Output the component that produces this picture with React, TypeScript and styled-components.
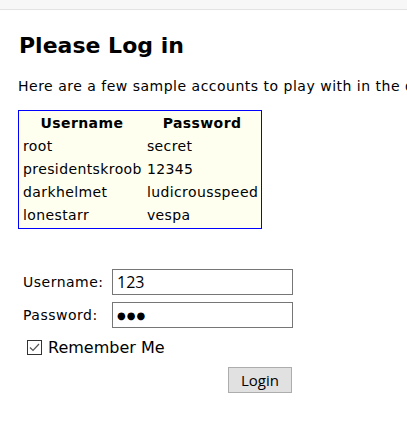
import React from 'react';
import styled, { createGlobalStyle } from 'styled-components';

const GlobalStyle = createGlobalStyle`
  html, body {
    margin: 0;
    padding: 0;
    background: #ffffff;
    overflow: hidden;
  }
  body {
    font-family: "DejaVu Sans", Verdana, sans-serif;
    color: #000000;
  }
`;

const TopBar = styled.div`
  height: 9px;
  background: #f7f7f7;
  border-bottom: 1px solid #e2e2e2;
`;

const Content = styled.div`
  padding: 0 18px;
  white-space: nowrap;
`;

const Heading = styled.h1`
  font-size: 22px;
  font-weight: bold;
  line-height: 26px;
  margin: 23px 0 0 1px;
`;

const Intro = styled.p`
  font-size: 14px;
  line-height: 18px;
  letter-spacing: 0.5px;
  margin: 18px 0 0 0;
`;

const AccountTable = styled.table`
  margin-top: 15px;
  border: 1px solid #0000ff;
  background: #fffff0;
  border-spacing: 2px;
  font-size: 14px;
  letter-spacing: 0.4px;
`;

const HeadCell = styled.th`
  font-weight: bold;
  text-align: center;
  padding: 1px;
  line-height: 19px;
`;

const Cell = styled.td`
  padding: 1px 1px 1px 2px;
  line-height: 19px;
`;

const LoginForm = styled.form`
  margin-top: 40px;
  display: flex;
  flex-direction: column;
  align-items: flex-start;
`;

const FieldRow = styled.div`
  display: grid;
  grid-template-columns: 94px 181px;
  align-items: center;
  margin-bottom: 7px;
`;

const Label = styled.label`
  font-size: 14px;
  letter-spacing: 0.5px;
  padding-left: 5px;
`;

const TextInput = styled.input<{ $masked?: boolean }>`
  box-sizing: border-box;
  width: 181px;
  height: 26px;
  border: 1px solid #767676;
  padding: 1px 4px;
  font-family: ${({ $masked }) => ($masked ? '"DejaVu Sans", sans-serif' : '"Open Sans", "Noto Sans", sans-serif')};
  font-size: ${({ $masked }) => ($masked ? '10px' : '16px')};
  letter-spacing: ${({ $masked }) => ($masked ? '1px' : '0')};
  color: #000;
  outline: none;
`;

const RememberRow = styled.label`
  display: flex;
  align-items: center;
  gap: 6px;
  margin: 3px 0 0 9px;
  font-size: 16px;
`;

const CheckBox = styled.span`
  box-sizing: border-box;
  width: 15px;
  height: 15px;
  border: 1px solid #333333;
  background: #ffffff;
  display: flex;
  align-items: center;
  justify-content: center;
`;

const ButtonRow = styled.div`
  width: 274px;
  display: flex;
  justify-content: flex-end;
  margin-top: 10px;
`;

const LoginButton = styled.button`
  box-sizing: border-box;
  width: 64px;
  height: 26px;
  background: #e1e1e1;
  border: 1px solid #adadad;
  font-family: "Open Sans", "Noto Sans", sans-serif;
  font-size: 15px;
  color: #000;
  padding: 0;
`;

const accounts: [string, string][] = [
  ['root', 'secret'],
  ['presidentskroob', '12345'],
  ['darkhelmet', 'ludicrousspeed'],
  ['lonestarr', 'vespa'],
];

export default function App() {
  return (
    <>
      <GlobalStyle />
      <TopBar />
      <Content>
        <Heading>Please Log in</Heading>
        <Intro>Here are a few sample accounts to play with in the default text-based UserDB:</Intro>
        <AccountTable>
          <thead>
            <tr>
              <HeadCell>Username</HeadCell>
              <HeadCell>Password</HeadCell>
            </tr>
          </thead>
          <tbody>
            {accounts.map(([user, pass]) => (
              <tr key={user}>
                <Cell>{user}</Cell>
                <Cell>{pass}</Cell>
              </tr>
            ))}
          </tbody>
        </AccountTable>
        <LoginForm onSubmit={(e) => e.preventDefault()}>
          <FieldRow>
            <Label>Username:</Label>
            <TextInput type="text" defaultValue="123" />
          </FieldRow>
          <FieldRow>
            <Label>Password:</Label>
            <TextInput type="text" $masked readOnly value={'\u25CF\u25CF\u25CF'} />
          </FieldRow>
          <RememberRow>
            <CheckBox>
              <svg width="11" height="9" viewBox="0 0 11 9">
                <path d="M1 4.5 L4 7.5 L10 1" fill="none" stroke="#555" strokeWidth="1.2" />
              </svg>
            </CheckBox>
            Remember Me
          </RememberRow>
          <ButtonRow>
            <LoginButton type="submit">Login</LoginButton>
          </ButtonRow>
        </LoginForm>
      </Content>
    </>
  );
}
